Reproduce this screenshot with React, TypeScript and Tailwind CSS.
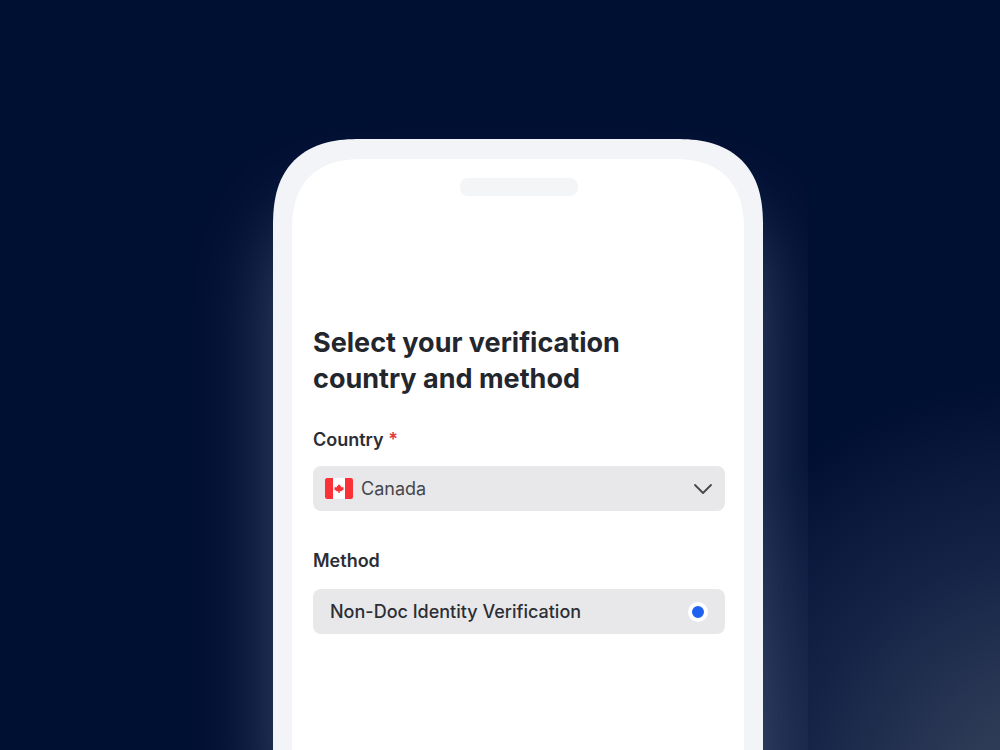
import { useState } from "react";

const countries = ["Canada", "United States", "United Kingdom", "Australia"];

const CanadaFlag = () => {
  return (
    <svg viewBox="0 0 28 21" className="h-[21px] w-7 shrink-0" aria-hidden="true">
      <rect width="28" height="21" rx="2" fill="#fff" />
      <path d="M2 0h6v21H2a2 2 0 0 1-2-2V2a2 2 0 0 1 2-2Z" fill="#fa3237" />
      <path d="M20 0h6a2 2 0 0 1 2 2v17a2 2 0 0 1-2 2h-6Z" fill="#fa3237" />
      <path
        d="M14 6l1.3 2 .9-.4-.2 2 1.3-.8.4.7 1.2-.1-.5 1.4.5.5-2.7 2h-1.5v1.7h-1.4v-1.7h-1.5l-2.7-2 .5-.5-.5-1.4 1.2.1.4-.7 1.3.8-.2-2 .9.4Z"
        fill="#fa3237"
      />
    </svg>
  );
};

const Chevron = () => {
  return (
    <svg
      viewBox="0 0 20 12"
      className="pointer-events-none h-3 w-5 shrink-0"
      fill="none"
      stroke="#45474c"
      strokeWidth="1.8"
      strokeLinecap="round"
      strokeLinejoin="round"
      aria-hidden="true"
    >
      <path d="M2 2l8 8 8-8" />
    </svg>
  );
};

export default function App() {
  const [country, setCountry] = useState("Canada");

  return (
    <div className="flex min-h-screen justify-center bg-[#001033] bg-[radial-gradient(ellipse_430px_430px_at_105%_108%,#36435e_0%,#2c3955_25%,#152347_60%,transparent_100%)] font-['Inter',sans-serif]">
      <main className="flex w-full max-w-[616px] overflow-hidden pt-[139px] pr-[45px] pl-[81px]">
        {/* Phone frame */}
        <div className="flex flex-1 rounded-t-[87px] bg-[#f3f4f8] px-[19px] pt-5 shadow-[0_70px_80px_rgba(190,205,235,0.3)] [corner-shape:superellipse(1.3)]">
          <div className="flex-1 rounded-t-[72px] bg-white pt-[19px] pr-[19px] pl-[21px] [corner-shape:superellipse(1.3)]">
            {/* Speaker */}
            <div className="mx-auto h-[18px] w-[118px] rounded-lg bg-[#f4f5f7]"></div>

            <form className="pt-[129px]">
              <h1 className="text-[27px] leading-9 font-bold text-[#23262d]">
                Select your verification country and method
              </h1>

              {/* Country */}
              <label
                htmlFor="country"
                className="mt-[31px] block text-lg leading-6 font-semibold text-[#2c2e35]"
              >
                Country <span className="text-[#e0393e]">*</span>
              </label>
              <div className="mt-[14px] flex h-[45px] items-center rounded-lg bg-[#e8e8ea] px-3">
                <CanadaFlag />
                <select
                  id="country"
                  required
                  value={country}
                  onChange={(e) => setCountry(e.target.value)}
                  className="h-full min-w-0 flex-1 cursor-pointer appearance-none bg-transparent pl-2 text-lg text-[#45474c] outline-none"
                >
                  {countries.map((name) => (
                    <option key={name}>{name}</option>
                  ))}
                </select>
                <Chevron />
              </div>

              {/* Method */}
              <fieldset className="mt-[38px]">
                <legend className="text-lg leading-6 font-semibold text-[#2c2e35]">
                  Method
                </legend>
                <label className="mt-4 flex h-[45px] cursor-pointer items-center justify-between rounded-lg bg-[#e8e8ea] px-[17px] text-lg font-medium text-[#2c2e35]">
                  Non-Doc Identity Verification
                  <input
                    type="radio"
                    name="method"
                    defaultChecked
                    className="size-5 shrink-0 appearance-none rounded-full border-4 border-white bg-white checked:bg-[#1f62f0]"
                  />
                </label>
              </fieldset>
            </form>
          </div>
        </div>
      </main>
    </div>
  );
}
